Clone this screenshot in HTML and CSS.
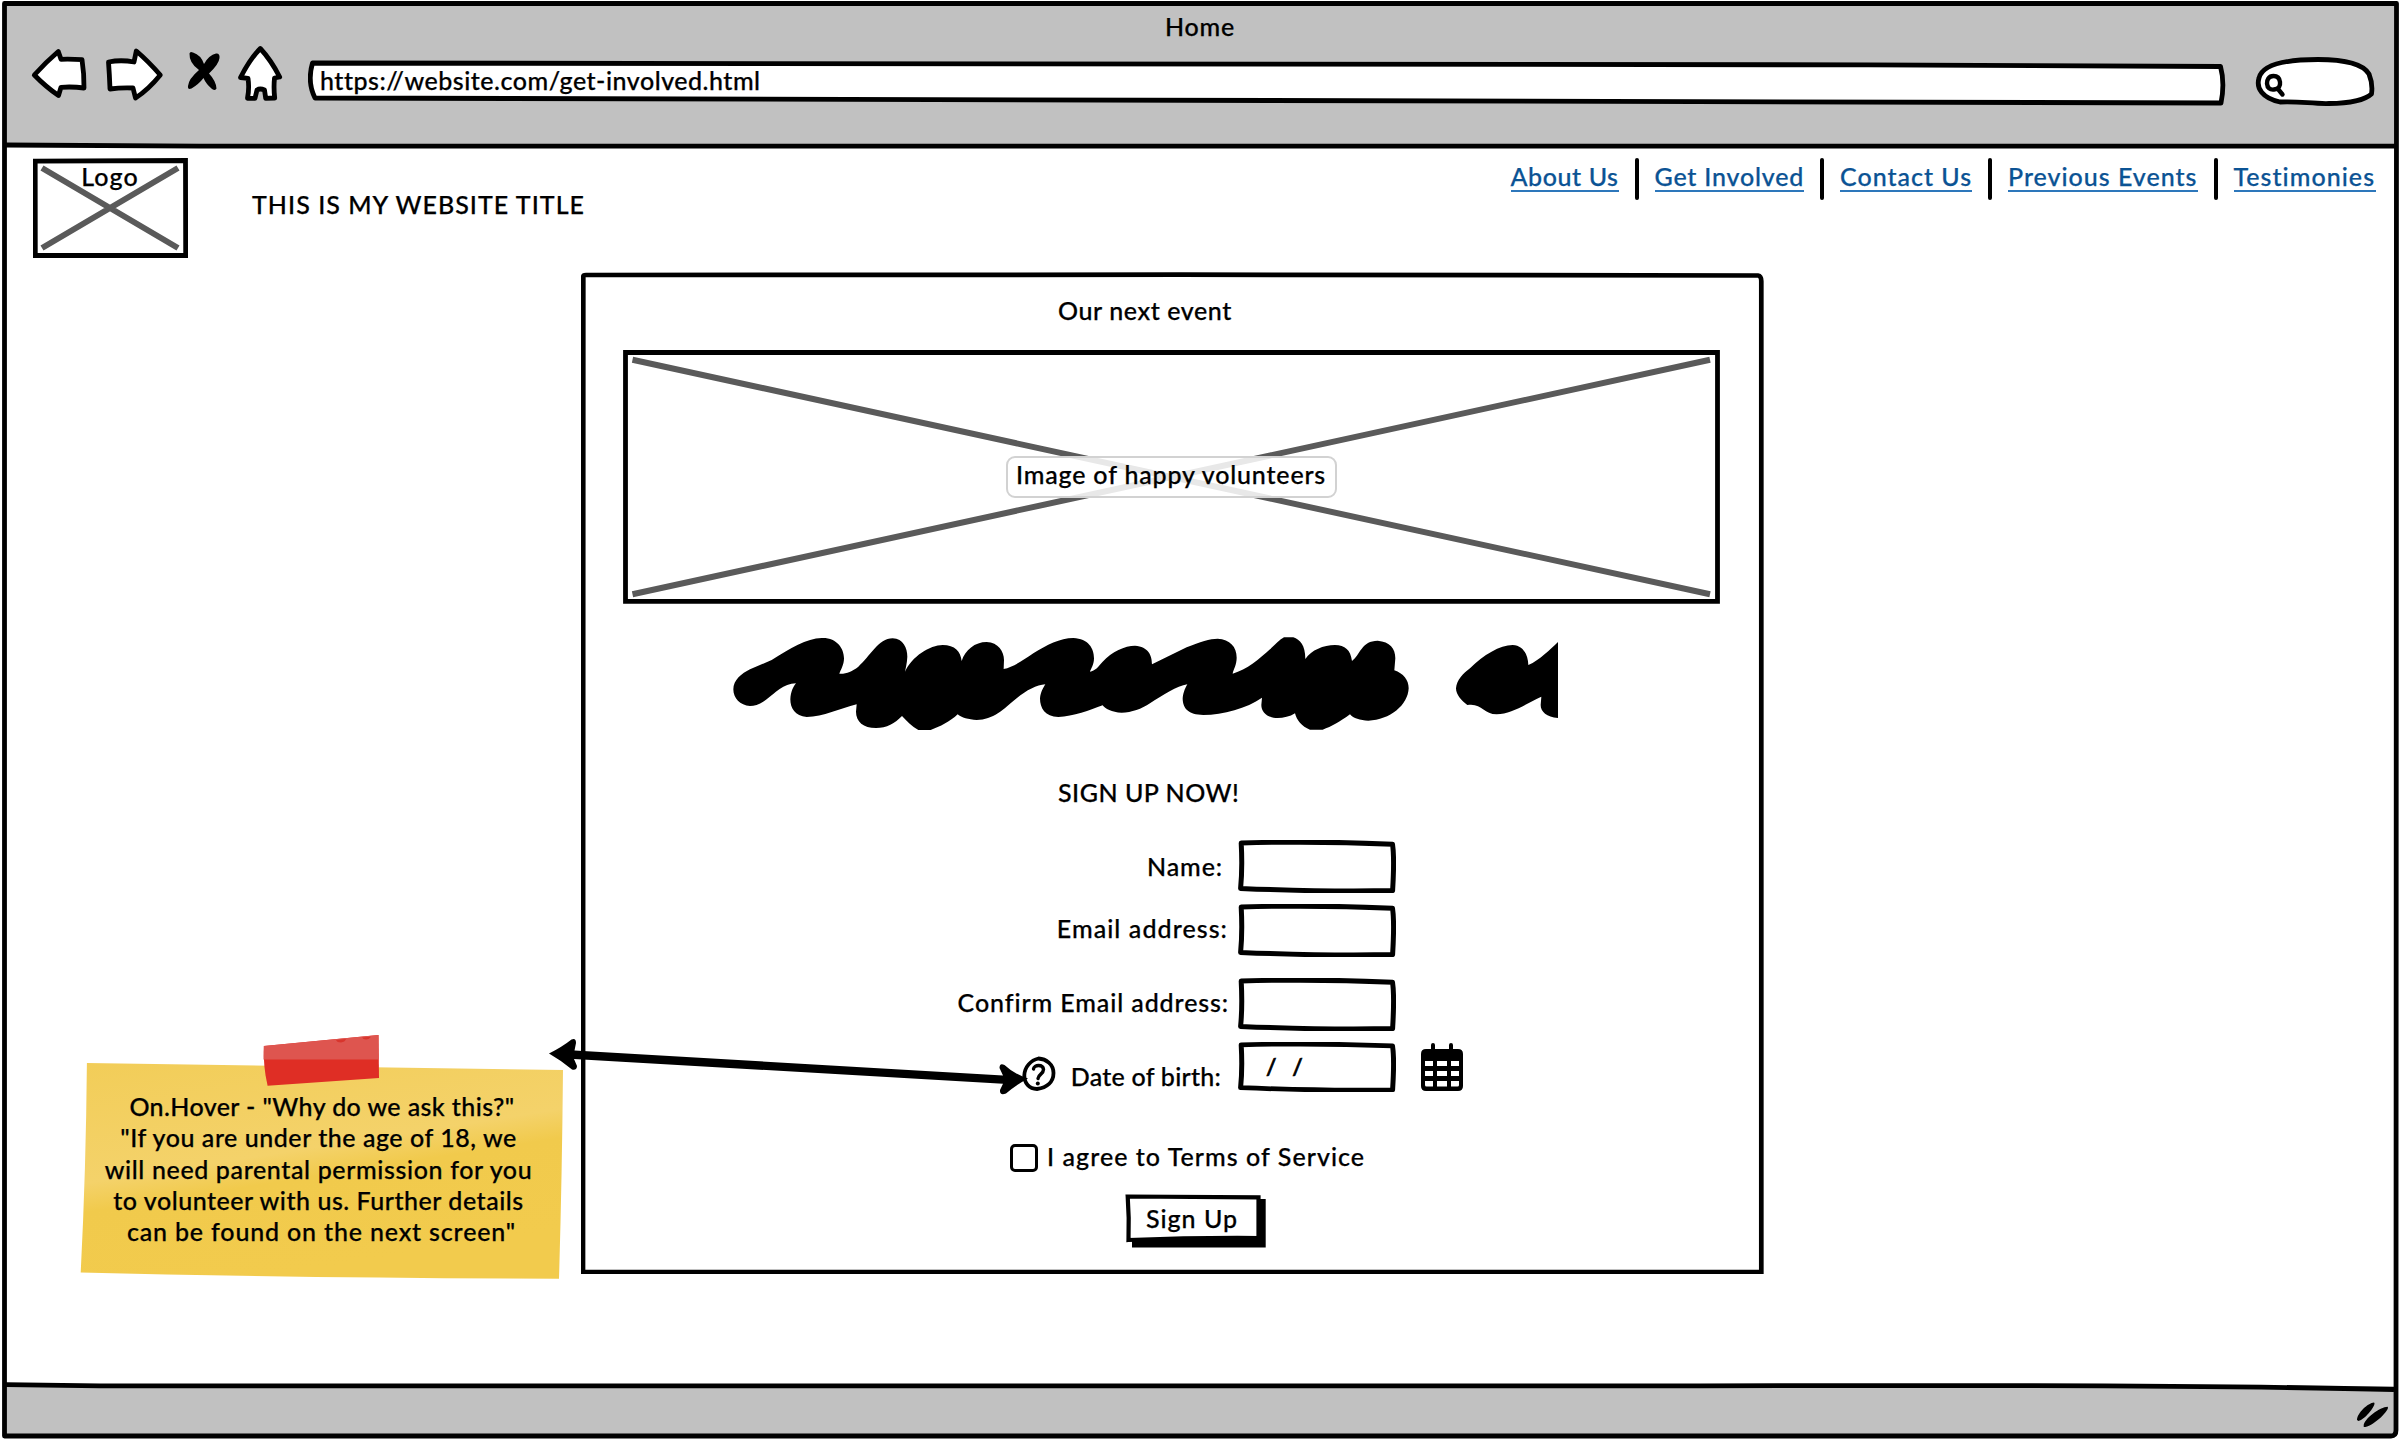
FILE: index.html
```html
<!DOCTYPE html>
<html lang="en">
<head>
<meta charset="utf-8">
<title>Home</title>
<link rel="stylesheet" href="styles.css">
</head>
<body>
<svg class="defs" aria-hidden="true">
  <symbol id="field-box" viewBox="0 0 158 53" preserveAspectRatio="none">
    <path d="M3.2 3C45 1.8 105 2 154.500 4.200C156.500 17 155.600 34 154.600 50.600C110 51.800 60 50.800 2.600 48.400C4.200 32 4 18 3.200 3Z" fill="#fff" stroke="#000" stroke-width="5" stroke-linejoin="round"/>
  </symbol>
</svg>
<div class="window">
  <header class="toolbar">
    <div class="window-title">Home</div>
    <div class="controls">
      <svg class="ico-back" width="64" height="64" viewBox="28 44 64 64"><path d="M34.3 75Q46 62 58.3 51.5L61 59.3Q72 59 82 59.7Q84.2 74 84 88Q73 86.5 61 87.3L58.5 95.5Q46 87 34.3 75Z"/></svg>
      <svg class="ico-forward" width="62" height="64" viewBox="104 44 62 64"><path d="M108.5 62Q121 59.5 134 62L136.3 51Q148 61 160.3 75Q148 90 135.5 98L133 88Q121 87.5 110 89Q109.5 75 108.5 62Z"/></svg>
      <svg class="ico-stop" width="40" height="64" viewBox="184 44 40 64"><path class="solid" d="M189.5 53.5Q190 51 193 52.5Q201 55 204 64Q209 55 216 53.5Q220 53 219.5 58Q219 64 209 73.5Q216 81 216.5 88.5Q215.5 91 212 89Q206 84 203.5 78Q199 84 191.5 88.5Q187.5 90 188 86Q188.5 79 199 70Q189 63 189.5 53.5Z"/></svg>
      <svg class="ico-home" width="48" height="64" viewBox="236 44 48 64"><path d="M260.3 48.5Q271 60 279.7 77L274.5 78Q273.5 88 274.7 98L265.7 98.3L264.5 90Q260 88 257 90L255 98.3L247.5 98.3Q249.5 88 248 78.3L240.5 77.5Q250 59 260.3 48.5Z"/></svg>
      <div class="address">
        <svg class="address-box" width="1918" height="64" viewBox="308 44 1918 64"><path d="M312.5 63C1000 63 1600 63 2220.5 66.5Q2225 83 2221 103C1500 103.5 900 99.5 315 98Q307 82 312.5 63Z"/></svg>
        <span class="address-text">https://website.com/get-involved.html</span>
      </div>
      <svg class="ico-search" width="122" height="64" viewBox="2254 44 122 64"><path d="M2280 102C2262 98 2256 88 2259 78C2262 66 2280 59.5 2318 59.5C2345 59.5 2363 64 2369 74Q2373 84 2371.5 94C2366 99 2352 103.5 2329 103.5C2312 104 2300 101 2280 102Z"/><path class="glass" d="M2273.5 76C2268.5 76 2266.8 80 2267 83.5C2267.3 88 2270 90 2274 89.5C2279 89 2280.5 86 2280 82C2279.5 78 2277.5 76 2273.5 76ZM2278 89L2282.5 94.5"/></svg>
    </div>
  </header>

  <main class="page">
    <div class="site-head">
      <div class="logo">
        <svg class="logo-box" width="155" height="100" viewBox="0 0 155 100"><path class="cross" d="M9 10L145 90M9 90L145 10"/><path class="edge" d="M2.2 3.2L152.5 2.5L152.7 97.5L2.3 97.5Z"/></svg>
        <span>Logo</span>
      </div>
      <h1>THIS IS MY WEBSITE TITLE</h1>
      <nav>
        <a class="n-about" href="#">About Us</a><i></i>
        <a class="n-involved" href="#">Get Involved</a><i></i>
        <a class="n-contact" href="#">Contact Us</a><i></i>
        <a class="n-events" href="#">Previous Events</a><i></i>
        <a class="n-testimonies" href="#">Testimonies</a>
      </nav>
    </div>

    <section class="panel">
      <h2>Our next event</h2>
      <figure class="photo">
        <svg class="photo-box" width="1097" height="254" viewBox="0 0 1097 254"><path class="cross" d="M9.5 9.7L1087 244.300M9.5 244.300L1087 9.7"/><path class="edge" d="M2.5 2.5H1094.5V251.3H2.5Z"/></svg>
        <figcaption>Image of happy volunteers</figcaption>
      </figure>
      <svg class="scribble" width="900" height="150" viewBox="0 0 2700 450">
        <path d="M100 238C100 210 125 190 150 178L215 150C270 115 320 85 365 84C410 82 432 115 432 145C432 165 422 180 418 191C440 192 455 185 475 170C510 140 535 85 578 85C610 86 622 115 622 140C621 160 617 175 615 185C635 140 690 105 728 105C765 105 782 125 785 153C795 120 825 96 860 96C895 97 912 125 912 150L911 177C940 172 970 150 1000 130C1040 105 1080 84 1120 84C1165 86 1182 115 1182 145C1182 165 1172 178 1170 185C1185 183 1195 170 1208 155C1235 125 1275 107 1305 107C1345 110 1356 135 1356 163L1460 112C1500 95 1530 86 1553 86C1590 88 1610 110 1610 143C1610 165 1600 178 1598 191C1640 180 1680 145 1710 118C1725 104 1740 88 1752 82L1780 82C1800 90 1816 105 1816 147C1835 120 1870 105 1905 105C1935 105 1952 120 1956 153C1980 135 1985 92 2033 92C2070 95 2086 115 2086 145L2083 181C2110 190 2126 210 2126 235C2124 285 2070 330 2005 332C1980 331 1960 325 1950 313C1920 335 1895 350 1868 359L1830 359C1805 350 1790 330 1785 310C1770 320 1750 324 1733 324C1700 324 1684 305 1684 285L1686 263C1640 295 1570 314 1510 315C1465 315 1448 295 1448 265C1450 245 1458 230 1462 223C1430 228 1390 255 1350 280C1325 297 1295 308 1265 308C1235 308 1215 295 1208 286C1170 300 1120 320 1075 321C1035 320 1020 295 1020 265C1022 245 1030 233 1036 223C1010 225 980 240 950 265C910 298 880 330 830 330C805 329 785 323 773 313C750 335 720 350 692 360L655 360C635 350 620 333 606 318C585 340 560 354 528 354C490 354 468 335 468 305L470 283C420 295 370 321 320 321C285 318 271 295 271 268C272 245 280 230 288 220C250 220 225 250 200 268C180 283 165 288 150 288C120 286 100 265 100 238Z"/>
        <path d="M2268 235C2270 210 2290 190 2310 175C2350 135 2400 105 2438 105C2470 106 2484 135 2485 165C2520 150 2550 118 2574 96L2574 324C2540 322 2522 305 2522 285L2524 260C2480 280 2435 313 2390 313C2350 312 2345 278 2302 285C2285 272 2268 255 2268 235Z"/>
      </svg>

      <form class="signup">
        <h3>SIGN UP NOW!</h3>
        <div class="row r-name">
          <label for="f-name">Name:</label>
          <div class="field"><svg><use href="#field-box"/></svg><input id="f-name"></div>
        </div>
        <div class="row r-email">
          <label for="f-email">Email address:</label>
          <div class="field"><svg><use href="#field-box"/></svg><input id="f-email"></div>
        </div>
        <div class="row r-confirm">
          <label for="f-confirm">Confirm Email address:</label>
          <div class="field"><svg><use href="#field-box"/></svg><input id="f-confirm"></div>
        </div>
        <div class="row r-dob">
          <svg class="help" width="34" height="36" viewBox="0 0 34 36"><path d="M16.5 2.500C24 3 31.500 8 31.500 17C31.500 26 25 31.500 15 33C7 33 2.300 27 2.300 19.500C2.500 11 9 4 16.500 2.500Z" stroke-width="3.800"/><path d="M11.500 13C12 8.500 21 8 21.500 13.500C21.500 18 16.500 18 16 22.500" stroke-width="3.400"/><circle cx="15.800" cy="27.500" r="2"/></svg>
          <label for="f-dob">Date of birth:</label>
          <div class="field"><svg><use href="#field-box"/></svg><span class="date">/ /</span></div>
          <svg class="calendar" width="42" height="48" viewBox="0 0 42 48"><path fill-rule="evenodd" d="M10 2Q10 0 12 0T14 2V6H28V2Q28 0 30 0T32 2V6H37Q42 6 42 11V43Q42 48 37 48H5Q0 48 0 43V11Q0 6 5 6H10ZM4 18V23H12V18ZM16 18V23H26V18ZM30 18V23H38V18ZM4 28V33H12V28ZM16 28V33H26V28ZM30 28V33H38V28ZM4 38V42Q4 43.500 5.500 43.500H12V38ZM16 38V43.500H26V38ZM30 38V43.500H36.500Q38 43.500 38 42V38Z"/></svg>
        </div>
        <label class="terms"><span class="check"></span><span>I agree to Terms of Service</span></label>
        <button type="button" class="submit">
          <svg width="141" height="54" viewBox="0 0 141 54"><path d="M7 5H140.700V53.500H7Z"/><path d="M2.700 2.500L133.500 3.300L133.500 44Q70 43.500 3.500 46Q4.300 24 2.700 2.500Z" fill="#fff" stroke="#000" stroke-width="4.200"/></svg>
          <span>Sign Up</span>
        </button>
      </form>
      <svg class="panel-edge" width="1183" height="1002" viewBox="0 0 1183 1002"><path d="M2.3 5Q2 3 5 3L600 2.7L1177 3.5Q1180.5 4 1180.300 10L1180.300 1000L2 1000Q2.800 500 2.300 5Z"/></svg>
    </section>
  </main>

  <footer class="statusbar">
    <svg width="34" height="26" viewBox="2356 1402 34 26"><path d="M2357 1420C2357 1413 2368 1403 2374 1402.5C2377 1404 2366 1419 2358.5 1421ZM2363.8 1427C2362 1420 2380 1407 2387.5 1406.8C2391 1409 2373 1427 2363.8 1427Z"/></svg>
  </footer>

  <svg class="frame" width="2400" height="1440" viewBox="0 0 2400 1440">
    <path d="M4.5 3.5H2396.500L2396 1430Q2396 1436 2391 1436H4.500Z"/>
    <path d="M4.500 145L200 146.200H2396"/>
    <path d="M6 1384.700L100 1385.800L1700 1385.800Q2200 1384.500 2394 1389.500"/>
  </svg>

  <aside class="note">
    <svg width="484" height="244" viewBox="80 1035 484 244">
      <defs><linearGradient id="paper" x1="0" y1="0" x2="0.35" y2="1"><stop offset="0" stop-color="#f2cd58"/><stop offset="0.5" stop-color="#f4d26a"/><stop offset="0.62" stop-color="#f1ca4c"/><stop offset="1" stop-color="#f2cb4d"/></linearGradient></defs>
      <path d="M86.9 1063L563 1070Q562 1180 559 1278.7Q300 1278 80.7 1272.5Q86 1170 86.9 1063Z" fill="url(#paper)"/>
      <path d="M263.9 1046L378.5 1035L379 1078L267.6 1085.7Q263 1066 263.9 1046Z" fill="#df2e25"/>
      <path d="M263.9 1046L378.5 1035V1059.5H263.5Z" fill="#de554f"/>
      <path d="M336 1040L346 1039Q345 1042 341 1042.5Q337 1042.5 336 1040ZM362 1037.5L371 1036.7Q369 1039.5 366 1039.5Q363 1039.5 362 1037.5Z" fill="#d8352d"/>
    </svg>
    <p>
      <span class="l1">On.Hover - "Why do we ask this?"</span>
      <span class="l2">"If you are under the age of 18, we</span>
      <span class="l3">will need parental permission for you</span>
      <span class="l4">to volunteer with us. Further details</span>
      <span class="l5">can be found on the next screen"</span>
    </p>
  </aside>
  <svg class="arrow" width="484" height="60" viewBox="547 1036 484 60"><path d="M549 1053.500Q562 1047 571.500 1039.500Q576 1037.500 576 1043L574.500 1050.500L1003 1075.500L999.500 1068Q999.500 1062.500 1004.500 1065Q1014 1074 1028 1078.500Q1016 1085 1006 1093.500Q999.500 1096 1000 1090L1003 1083.800L574 1059L577 1066Q577 1070.500 572 1069.500Q562 1061 549 1053.500Z"/></svg>
</div>
</body>
</html>
```
FILE: styles.css
```css
* { box-sizing: border-box; }
body {
  margin: 0;
  background: #fff;
  color: #000;
  font: 500 25px/30px Lato, "Open Sans", sans-serif;
  -webkit-text-stroke: 0.25px currentColor;
}
svg { display: block; flex: none; }
h1, h2, h3, p, figure { margin: 0; font-size: inherit; font-weight: inherit; }
.defs { position: absolute; width: 0; height: 0; }

.window {
  position: relative;
  width: 2400px;
  height: 1440px;
  padding: 2px 4px 4px 4px;
  display: grid;
  grid-template-rows: 144px 1fr 50px;
  overflow: hidden;
}
.frame { position: absolute; inset: 0; pointer-events: none; }
.frame path { fill: none; stroke: #000; stroke-width: 4.8; stroke-linejoin: round; }

/* Browser chrome */
.toolbar { background: #c1c1c1; padding-top: 9px; }
.window-title { text-align: center; letter-spacing: 0.8px; }
.controls { display: flex; padding-left: 24px; margin-top: 3px; }
.controls svg path { fill: #fff; stroke: #000; stroke-width: 4.8; stroke-linejoin: round; }
.controls svg .solid { fill: #000; stroke: none; }
.controls svg .glass { fill: none; stroke-linecap: round; stroke-width: 4.4; }
.ico-forward { margin-left: 12px; }
.ico-stop { margin-left: 18px; }
.ico-home { margin-left: 12px; }
.address { display: grid; margin-left: 24px; }
.address > * { grid-area: 1 / 1; }
.address-text { padding: 21px 0 0 12px; letter-spacing: 0.52px; }
.ico-search { margin-left: 28px; }

.statusbar {
  background: #c1c1c1;
  display: flex;
  justify-content: flex-end;
  padding: 16px 6px 0 0;
}

/* Site header */
.site-head { display: flex; height: 126px; padding: 12px 20.5px 0 29px; align-items: flex-start; }
.logo { display: grid; width: 155px; }
.logo > * { grid-area: 1 / 1; }
.logo span { text-align: center; padding: 3px 1px 0 0; letter-spacing: 1.1px; }
.cross { fill: none; stroke: #5a5a5a; stroke-width: 6; }
.edge { fill: none; stroke: #000; stroke-width: 4.8; }
.site-head h1 { margin: 31px 0 0 64px; letter-spacing: 1.03px; }
nav { margin-left: auto; display: flex; gap: 16px; }
nav a {
  margin-top: 3px;
  height: 31px;
  color: #0b5394;
  text-decoration: none;
  border-bottom: 2px solid #2d77bb;
  white-space: nowrap;
}
nav i { width: 4px; height: 42px; border-radius: 2px; background: #000; }
.n-about { width: 108px; letter-spacing: 0.59px; }
.n-involved { width: 149.5px; letter-spacing: 0.8px; }
.n-contact { width: 132px; letter-spacing: 1px; }
.n-events { width: 189.5px; letter-spacing: 1px; }
.n-testimonies { width: 142px; letter-spacing: 1.04px; }

/* Event panel */
.panel { position: relative; width: 1183px; height: 1002px; margin-left: 577px; padding-top: 23px; }
.panel-edge { position: absolute; inset: 0; pointer-events: none; }
.panel-edge path { fill: none; stroke: #000; stroke-width: 4.7; }
.panel h2 { padding-left: 477px; letter-spacing: 0.6px; }
.photo { display: grid; place-items: center; width: 1097px; margin: 25px 0 0 42px; }
.photo > * { grid-area: 1 / 1; }
.photo figcaption {
  width: 331px;
  height: 42px;
  padding: 1px 1px 0 0;
  text-align: center;
  background: rgba(255, 255, 255, 0.86);
  border: 2px solid #d2d2d2;
  border-radius: 9px;
  letter-spacing: 0.83px;
}
.scribble { margin: 6px 0 0 119px; }

.signup h3 { margin-top: 17px; padding-left: 477px; letter-spacing: 0.5px; }
.row { display: flex; align-items: flex-start; }
.row label { width: 657px; text-align: right; white-space: nowrap; }
.field { display: grid; width: 158px; height: 53px; }
.field > * { grid-area: 1 / 1; width: 100%; height: 100%; }
.field input { border: 0; background: none; padding: 0 12px; font: inherit; outline: none; }
.r-name { margin-top: 33px; }
.r-name label { padding: 11px 15px 0 0; letter-spacing: 0.9px; }
.r-email { margin-top: 11px; }
.r-email label { padding: 9px 10px 0 0; letter-spacing: 1.08px; }
.r-confirm { margin-top: 21px; }
.r-confirm label { padding: 9px 9px 0 0; letter-spacing: 0.9px; }
.r-dob { margin-top: 11px; padding-left: 441px; }
.r-dob label { width: 182px; padding: 19px 17px 0 0; letter-spacing: 0.25px; }
.r-dob .field { height: 50px; }
.field .date { padding: 9px 0 0 28px; font-size: 23px; word-spacing: 10px; -webkit-text-stroke-width: 0.7px; }
.help { margin-top: 14px; }
.help path { fill: none; stroke: #000; stroke-linecap: round; }
.calendar { margin: 1px 0 0 25px; }

.terms { display: flex; margin: 49px 0 0 429px; }
.check { width: 28px; height: 28px; margin: 3px 9px 0 0; border: 3px solid #000; border-radius: 5px; }
.terms span:last-child { letter-spacing: 1.05px; }
.submit {
  display: grid;
  width: 141px;
  height: 54px;
  margin: 22px 0 0 544px;
  padding: 0;
  border: 0;
  background: none;
  color: inherit;
  font: inherit;
}
.submit > * { grid-area: 1 / 1; }
.submit span { padding: 9px 7px 0 0; letter-spacing: 1px; }

/* Annotations laid over the wireframe */
.note { position: absolute; left: 80px; top: 1035px; width: 484px; display: grid; }
.note > * { grid-area: 1 / 1; }
.note p { padding: 56px 7px 0 0; line-height: 31.3px; text-align: center; white-space: nowrap; }
.note span { display: block; }
.l1 { letter-spacing: 0.4px; padding-left: 7px; }
.l2 { letter-spacing: 0.54px; }
.l3 { letter-spacing: 0.63px; }
.l4 { letter-spacing: 0.53px; }
.l5 { letter-spacing: 0.83px; padding-left: 6px; }
.arrow { position: absolute; left: 547px; top: 1036px; }
```
